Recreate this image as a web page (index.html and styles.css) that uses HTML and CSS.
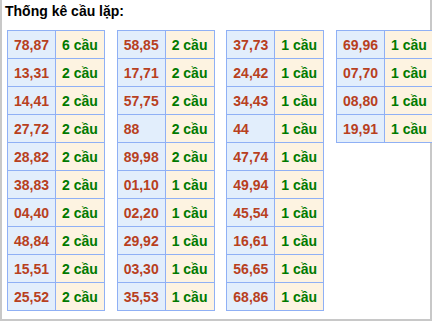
FILE: index.html
```html
<!DOCTYPE html>
<html lang="vi">
<head>
<meta charset="utf-8">
<title>Thống kê cầu lặp</title>
<link rel="stylesheet" href="styles.css">
</head>
<body>
<div class="box">
  <div class="title">Thống kê cầu lặp:</div>
  <div class="tables">
    <table class="grid">
      <tr><td class="num">78,87</td><td class="cnt">6 cầu</td></tr>
      <tr><td class="num">13,31</td><td class="cnt">2 cầu</td></tr>
      <tr><td class="num">14,41</td><td class="cnt">2 cầu</td></tr>
      <tr><td class="num">27,72</td><td class="cnt">2 cầu</td></tr>
      <tr><td class="num">28,82</td><td class="cnt">2 cầu</td></tr>
      <tr><td class="num">38,83</td><td class="cnt">2 cầu</td></tr>
      <tr><td class="num">04,40</td><td class="cnt">2 cầu</td></tr>
      <tr><td class="num">48,84</td><td class="cnt">2 cầu</td></tr>
      <tr><td class="num">15,51</td><td class="cnt">2 cầu</td></tr>
      <tr><td class="num">25,52</td><td class="cnt">2 cầu</td></tr>
    </table>
    <table class="grid">
      <tr><td class="num">58,85</td><td class="cnt">2 cầu</td></tr>
      <tr><td class="num">17,71</td><td class="cnt">2 cầu</td></tr>
      <tr><td class="num">57,75</td><td class="cnt">2 cầu</td></tr>
      <tr><td class="num">88</td><td class="cnt">2 cầu</td></tr>
      <tr><td class="num">89,98</td><td class="cnt">2 cầu</td></tr>
      <tr><td class="num">01,10</td><td class="cnt">1 cầu</td></tr>
      <tr><td class="num">02,20</td><td class="cnt">1 cầu</td></tr>
      <tr><td class="num">29,92</td><td class="cnt">1 cầu</td></tr>
      <tr><td class="num">03,30</td><td class="cnt">1 cầu</td></tr>
      <tr><td class="num">35,53</td><td class="cnt">1 cầu</td></tr>
    </table>
    <table class="grid">
      <tr><td class="num">37,73</td><td class="cnt">1 cầu</td></tr>
      <tr><td class="num">24,42</td><td class="cnt">1 cầu</td></tr>
      <tr><td class="num">34,43</td><td class="cnt">1 cầu</td></tr>
      <tr><td class="num">44</td><td class="cnt">1 cầu</td></tr>
      <tr><td class="num">47,74</td><td class="cnt">1 cầu</td></tr>
      <tr><td class="num">49,94</td><td class="cnt">1 cầu</td></tr>
      <tr><td class="num">45,54</td><td class="cnt">1 cầu</td></tr>
      <tr><td class="num">16,61</td><td class="cnt">1 cầu</td></tr>
      <tr><td class="num">56,65</td><td class="cnt">1 cầu</td></tr>
      <tr><td class="num">68,86</td><td class="cnt">1 cầu</td></tr>
    </table>
    <table class="grid">
      <tr><td class="num">69,96</td><td class="cnt">1 cầu</td></tr>
      <tr><td class="num">07,70</td><td class="cnt">1 cầu</td></tr>
      <tr><td class="num">08,80</td><td class="cnt">1 cầu</td></tr>
      <tr><td class="num">19,91</td><td class="cnt">1 cầu</td></tr>
    </table>
  </div>
</div>
</body>
</html>
```

FILE: styles.css
```css
html, body {
  margin: 0;
  padding: 0;
  background: #ffffff;
}

.box {
  box-sizing: border-box;
  width: 432px;
  height: 321px;
  border: 2px solid #c8c8c8;
  border-top: none;
  padding: 0 0 0 5px;
  font-family: "Liberation Sans", Arial, sans-serif;
}

.title {
  font-size: 14px;
  font-weight: bold;
  color: #000;
  line-height: 20px;
  padding-top: 1px;
  margin-left: -2px;
}

.tables {
  display: flex;
  align-items: flex-start;
  gap: 11.67px;
  margin-top: 9px;
}

.grid {
  border-collapse: collapse;
  width: 97px;
  table-layout: fixed;
}

.grid td {
  border: 1px solid #8fb0f5;
  height: 28px;
  padding: 0 0 0 6px;
  font-size: 14px;
  font-weight: bold;
  white-space: nowrap;
  box-sizing: border-box;
}

.grid td.num {
  width: 48px;
  background: #e2eefc;
  color: #b8401e;
}

.grid td.cnt {
  width: 49px;
  background: #fdf3e1;
  color: #007a00;
}
```
